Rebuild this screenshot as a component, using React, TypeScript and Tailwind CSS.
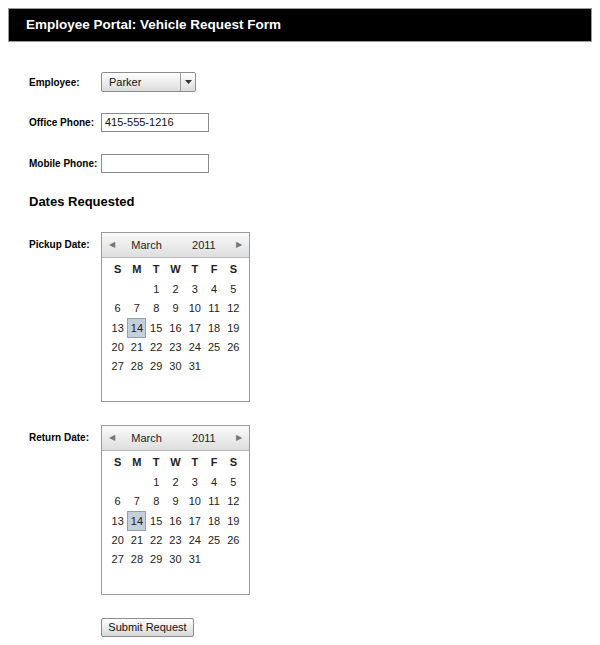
import React from "react";

const days = ["S", "M", "T", "W", "T", "F", "S"];
const cells: (number | null)[] = [
  null, null, 1, 2, 3, 4, 5,
  6, 7, 8, 9, 10, 11, 12,
  13, 14, 15, 16, 17, 18, 19,
  20, 21, 22, 23, 24, 25, 26,
  27, 28, 29, 30, 31, null, null,
  null, null, null, null, null, null, null,
];

const Calendar = () => (
  <div className="w-[149px] h-[170px] border border-[#9a9a9a] bg-white">
    {/* month header */}
    <div className="h-[25px] flex items-center justify-between px-[7px] border-b border-[#b8b8b8] bg-gradient-to-b from-[#fafafa] to-[#dedede] text-[11px] text-[#222]">
      <span className="text-[8px] text-[#777]">◀</span>
      <span className="ml-[12px]">March</span>
      <span className="ml-[26px]">2011</span>
      <span className="text-[8px] text-[#777] ml-[16px]">▶</span>
    </div>
    <div className="grid grid-cols-7 px-[6px] pt-[2px] text-[11px] text-[#222]">
      {days.map((d, i) => (
        <div key={i} className="h-[19.4px] flex items-center justify-center font-bold">
          {d}
        </div>
      ))}
      {cells.map((c, i) => (
        <div key={i} className="h-[19.4px] flex items-center justify-center">
          {c === 14 ? (
            <span className="w-[19px] h-[20px] flex items-center justify-center bg-[#c4cfdc] border border-[#8ea1b5]">
              {c}
            </span>
          ) : (
            c
          )}
        </div>
      ))}
    </div>
  </div>
);

const Label = ({ children }: { children: React.ReactNode }) => (
  <div className="w-[72px] shrink-0 whitespace-nowrap text-[10px] font-bold text-black">{children}</div>
);

export default function App() {
  return (
    <div
      className="w-[600px] h-[645px] bg-white pt-[8px] px-[8px]"
      style={{ fontFamily: '"Liberation Sans", Arial, sans-serif' }}
    >
      <div className="h-[34px] bg-black border border-[#9a9a9a] flex items-center pl-[17px] text-white text-[13.5px] font-bold">
        Employee Portal: Vehicle Request Form
      </div>

      <div className="pl-[21px] pt-[30px] flex flex-col">
        <div className="flex items-center h-[20px]">
          <Label>Employee:</Label>
          <div className="w-[95px] h-[20px] flex border border-[#8c8c8c] rounded-[2px] bg-gradient-to-b from-[#ffffff] to-[#dcdcdc] text-[11px] text-[#111]">
            <span className="flex-1 flex items-center pl-[7px]">Parker</span>
            <span className="w-[15px] border-l border-[#9c9c9c] flex items-center justify-center">
              <svg width="7" height="4" viewBox="0 0 7 4">
                <path d="M0 0 L7 0 L3.5 4 Z" fill="#333" />
              </svg>
            </span>
          </div>
        </div>

        <div className="flex items-center h-[19px] mt-[21px]">
          <Label>Office Phone:</Label>
          <div className="w-[108px] h-[19px] border border-[#8a8a8a] flex items-center pl-[3px] text-[11px] text-[#111]">
            415-555-1216
          </div>
        </div>

        <div className="flex items-center h-[19px] mt-[22px]">
          <Label>Mobile Phone:</Label>
          <div className="w-[108px] h-[19px] border border-[#8a8a8a]" />
        </div>

        <div className="mt-[20px] text-[13px] font-bold text-black h-[18px] flex items-center">
          Dates Requested
        </div>

        <div className="flex mt-[21px]">
          <div className="pt-[5px]">
            <Label>Pickup Date:</Label>
          </div>
          <Calendar />
        </div>

        <div className="flex mt-[23px]">
          <div className="pt-[5px]">
            <Label>Return Date:</Label>
          </div>
          <Calendar />
        </div>

        <div className="flex mt-[23px]">
          <div className="w-[72px]" />
          <button className="w-[93px] h-[19px] border border-[#8c8c8c] rounded-[2px] bg-gradient-to-b from-[#ffffff] to-[#d8d8d8] text-[11px] text-[#111] flex items-center justify-center">
            Submit Request
          </button>
        </div>
      </div>
    </div>
  );
}
